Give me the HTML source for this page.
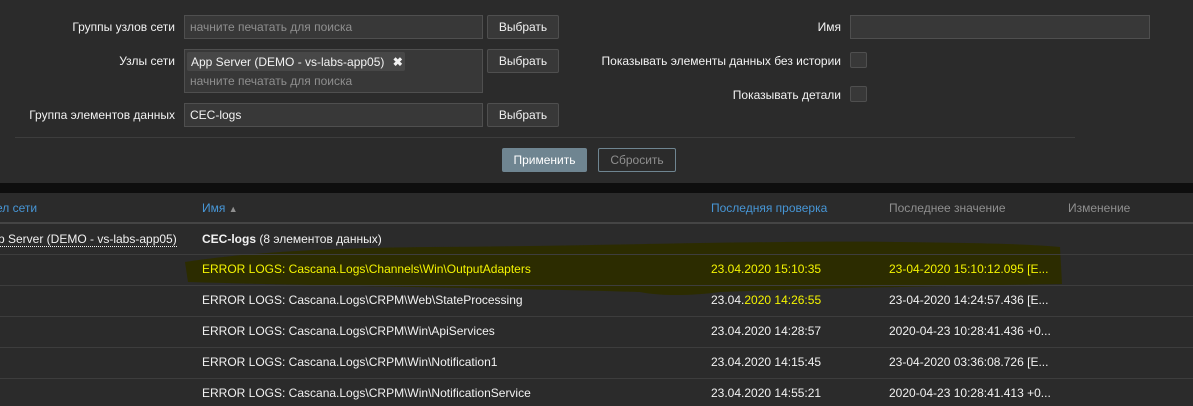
<!DOCTYPE html>
<html><head><meta charset="utf-8"><style>
*{margin:0;padding:0;box-sizing:border-box}
body{width:1193px;height:406px;background:#2b2b2b;font-family:"Liberation Sans",Arial,sans-serif;font-size:12px;color:#f2f2f2;position:relative;overflow:hidden}
.a{position:absolute}
.lbl{position:absolute;text-align:right;white-space:nowrap;line-height:14px}
.inp{position:absolute;background:#383838;border:1px solid #4f4f4f}
.btn{position:absolute;background:#383838;border:1px solid #4f4f4f;color:#f2f2f2;text-align:center;line-height:22px;border-radius:2px}
.ph{color:#8f8f8f;position:absolute;left:5px;top:4px;white-space:nowrap}
.cb{position:absolute;width:17px;height:16px;background:#383838;border:1px solid #4f4f4f;border-radius:2px}
.t{position:absolute;white-space:nowrap;line-height:14px}
.line{position:absolute;left:0;width:1193px;height:1px;background:#3d3d3d}
.y{color:#f4f400}
</style></head><body>
<div class="lbl" style="right:1018px;top:20px">Группы узлов сети</div>
<div class="inp" style="left:184px;top:15px;width:299px;height:24px"><span class="ph">начните печатать для поиска</span></div>
<div class="btn" style="left:487px;top:15px;width:72px;height:24px">Выбрать</div>

<div class="lbl" style="right:1018px;top:54px">Узлы сети</div>
<div class="inp" style="left:184px;top:49px;width:299px;height:44px">
<div class="a" style="left:2px;top:2px;width:218px;height:19px;background:#474747;border-radius:2px;padding:3px 0 0 4px;white-space:nowrap">App Server (DEMO - vs-labs-app05) <b style="margin-left:5px">✖</b></div>
<span class="ph" style="top:24px">начните печатать для поиска</span></div>
<div class="btn" style="left:487px;top:49px;width:72px;height:24px">Выбрать</div>

<div class="lbl" style="right:1018px;top:108px">Группа элементов данных</div>
<div class="inp" style="left:184px;top:103px;width:299px;height:24px"><span class="ph" style="color:#f2f2f2">CEC-logs</span></div>
<div class="btn" style="left:487px;top:103px;width:72px;height:24px">Выбрать</div>

<div class="lbl" style="right:352px;top:20px">Имя</div>
<div class="inp" style="left:850px;top:15px;width:300px;height:24px"></div>
<div class="lbl" style="right:352px;top:54px">Показывать элементы данных без истории</div>
<div class="cb" style="left:850px;top:52px"></div>
<div class="lbl" style="right:352px;top:88px">Показывать детали</div>
<div class="cb" style="left:850px;top:86px"></div>

<div class="a" style="left:15px;top:137px;width:1060px;height:1px;background:#3d3d3d"></div>
<div class="btn" style="left:502px;top:148px;width:85px;height:24px;background:#6f8591;border-color:#6f8591;color:#fff">Применить</div>
<div class="btn" style="left:598px;top:148px;width:78px;height:24px;background:#2b2b2b;border-color:#6f8591;color:#8f8f8f">Сбросить</div>

<div class="a" style="left:0;top:183px;width:1193px;height:10px;background:#0e0e0e"></div>

<div class="t" style="left:-4px;top:201px;color:#4796d6">ел сети</div>
<div class="t" style="left:202px;top:201px;color:#4796d6">Имя <span style="color:#8f8f8f;font-size:9px">▲</span></div>
<div class="t" style="left:711px;top:201px;color:#4796d6">Последняя проверка</div>
<div class="t" style="left:889px;top:201px;color:#8f8f8f">Последнее значение</div>
<div class="t" style="left:1068px;top:201px;color:#8f8f8f">Изменение</div>
<div class="a" style="left:0;top:222px;width:1193px;height:2px;background:#454545"></div>

<svg class="a" style="left:0;top:0" width="1193" height="406"><path d="M185 262 C250 252 330 248 430 247 C600 246 780 240 900 242 C980 243 1030 244 1060 247 L1062 284 C950 286 820 288 720 292 C690 296 660 296 640 292 C500 288 320 286 188 282 Z" fill="#2c2c00"/></svg>

<div class="t" style="left:-2px;top:232px;border-bottom:1px dotted #f2f2f2">p Server (DEMO - vs-labs-app05)</div>
<div class="t" style="left:202px;top:232px"><b>CEC-logs</b> (8 элементов данных)</div>
<div class="line" style="top:254px"></div>
<div class="t y" style="left:202px;top:262px">ERROR LOGS: Cascana.Logs\Channels\Win\OutputAdapters</div>
<div class="t y" style="left:711px;top:262px">23.04.2020 15:10:35</div>
<div class="t y" style="left:889px;top:262px">23-04-2020 15:10:12.095 [E...</div>
<div class="line" style="top:285px"></div>
<div class="t" style="left:202px;top:293px">ERROR LOGS: Cascana.Logs\CRPM\Web\StateProcessing</div>
<div class="t" style="left:711px;top:293px">23.04.<span class="y">2020 14:26:55</span></div>
<div class="t" style="left:889px;top:293px">23-04-2020 14:24:57.436 [E...</div>
<div class="line" style="top:316px"></div>
<div class="t" style="left:202px;top:324px">ERROR LOGS: Cascana.Logs\CRPM\Win\ApiServices</div>
<div class="t" style="left:711px;top:324px">23.04.2020 14:28:57</div>
<div class="t" style="left:889px;top:324px">2020-04-23 10:28:41.436 +0...</div>
<div class="line" style="top:347px"></div>
<div class="t" style="left:202px;top:355px">ERROR LOGS: Cascana.Logs\CRPM\Win\Notification1</div>
<div class="t" style="left:711px;top:355px">23.04.2020 14:15:45</div>
<div class="t" style="left:889px;top:355px">23-04-2020 03:36:08.726 [E...</div>
<div class="line" style="top:378px"></div>
<div class="t" style="left:202px;top:386px">ERROR LOGS: Cascana.Logs\CRPM\Win\NotificationService</div>
<div class="t" style="left:711px;top:386px">23.04.2020 14:55:21</div>
<div class="t" style="left:889px;top:386px">2020-04-23 10:28:41.413 +0...</div>
</body></html>
